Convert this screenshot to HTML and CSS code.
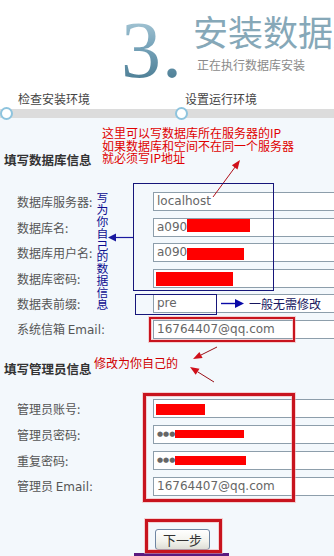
FILE: index.html
```html
<!DOCTYPE html>
<html lang="zh-CN">
<head>
<meta charset="utf-8">
<title>安装数据库</title>
<link rel="stylesheet" href="styles.css">
</head>
<body>
<div class="page">
  <header class="header">
    <div class="num">3.</div>
    <div class="titles">
      <div class="title">安装数据库</div>
      <div class="subtitle">正在执行数据库安装</div>
    </div>
  </header>

  <div class="steps">
    <div class="step-labels">
      <span class="step-label">检查安装环境</span>
      <span class="step-label">设置运行环境</span>
    </div>
    <div class="bar">
      <span class="dot dot-first"></span>
      <span class="dot dot-second"></span>
    </div>
  </div>

  <main class="main">
    <h2 class="sec-title sec-db">填写数据库信息</h2>
    <div class="grid grid-db">
      <label class="lbl">数据库服务器:</label><div class="field">localhost</div>
      <label class="lbl">数据库名:</label><div class="field">a090<span class="red r-dbname"></span></div>
      <label class="lbl">数据库用户名:</label><div class="field">a090<span class="red r-dbuser"></span></div>
      <label class="lbl">数据库密码:</label><div class="field"><span class="red r-dbpass"></span></div>
      <label class="lbl">数据表前缀:</label><div class="field">pre</div>
      <label class="lbl">系统信箱 <span class="lat">Email:</span></label><div class="field">16764407@qq.com</div>
    </div>

    <h2 class="sec-title sec-admin">填写管理员信息</h2>
    <div class="grid grid-admin">
      <label class="lbl">管理员账号:</label><div class="field"><span class="red r-acct"></span></div>
      <label class="lbl">管理员密码:</label><div class="field"><span class="dots">●●●</span><span class="red r-pass"></span></div>
      <label class="lbl">重复密码:</label><div class="field"><span class="dots">●●●</span><span class="red r-pass2"></span></div>
      <label class="lbl">管理员 <span class="lat">Email:</span></label><div class="field">16764407@qq.com</div>
    </div>

    <div class="actions">
      <button class="btn" type="button">下一步</button>
    </div>
  </main>

  <div class="note note-ip">这里可以写数据库所在服务器的IP<br>如果数据库和空间不在同一个服务器<br>就必须写IP地址</div>
  <div class="note note-vert">写为你自己的数据信息</div>
  <div class="note note-pre">一般无需修改</div>
  <div class="note note-admin">修改为你自己的</div>

  <svg class="overlay" width="334" height="556" viewBox="0 0 334 556" aria-hidden="true">
    <line x1="213" y1="197" x2="235.5" y2="166.5" stroke="#b0101a" stroke-width="1"/>
    <polygon points="240,160 237.5,169.4 231.9,165.2" fill="#d0101a"/>
    <rect x="133.5" y="183.5" width="140" height="107" fill="none" stroke="#16167a" stroke-width="1"/>
    <line x1="133" y1="237.5" x2="114" y2="237.5" stroke="#1a1aa0" stroke-width="1.2"/>
    <polygon points="108,237.5 116,233.5 116,241.5" fill="#1a1aa0"/>
    <rect x="135.5" y="294.5" width="81" height="20" fill="none" stroke="#16167a" stroke-width="1"/>
    <line x1="221" y1="303.5" x2="237" y2="303.5" stroke="#0a0aa8" stroke-width="1.4"/>
    <polygon points="244,303.5 235,299 235,308" fill="#0a0aa8"/>
    <rect x="150" y="318" width="144" height="23" fill="none" stroke="#f3a8a8" stroke-width="4" opacity="0.5"/>
    <rect x="150" y="318" width="144" height="23" fill="none" stroke="#c8141e" stroke-width="2"/>
    <line x1="217" y1="347" x2="201" y2="355" stroke="#9a1018" stroke-width="1"/>
    <polygon points="193,359 202.6,358.1 199.4,351.9" fill="#d0101a"/>
    <line x1="214" y1="382" x2="197.6" y2="371.8" stroke="#9a1018" stroke-width="1"/>
    <polygon points="190,367 199.5,368.8 195.7,374.8" fill="#d0101a"/>
    <rect x="144.5" y="394.5" width="149" height="106" fill="none" stroke="#f3a8a8" stroke-width="5" opacity="0.5"/>
    <rect x="144.5" y="394.5" width="149" height="106" fill="none" stroke="#c8141e" stroke-width="3"/>
    <rect x="134" y="553" width="95" height="3" fill="#5a1a80"/>
    <rect x="146.5" y="520.5" width="74" height="31" fill="none" stroke="#f3a8a8" stroke-width="5" opacity="0.5"/>
    <rect x="146.5" y="520.5" width="74" height="31" fill="none" stroke="#c8141e" stroke-width="3"/>
  </svg>
</div>
</body>
</html>
```
FILE: styles.css
```css
html, body {
  margin: 0;
  padding: 0;
}
body {
  width: 334px;
  height: 556px;
  overflow: hidden;
  background: #f3f8fc;
  font-family: "Noto Sans CJK SC", "DejaVu Sans", sans-serif;
  font-size: 12px;
  color: #555;
}
.page {
  position: relative;
  width: 334px;
  height: 556px;
  overflow: hidden;
}

/* header */
.header {
  height: 86px;
  background: #ffffff;
  display: flex;
  padding-left: 121px;
  box-sizing: border-box;
  white-space: nowrap;
  overflow: hidden;
}
.num {
  font-family: "Liberation Serif", serif;
  font-size: 80px;
  line-height: 80px;
  margin-top: 10px;
  background: linear-gradient(180deg, #b6d2de 0%, #7aa6bc 45%, #46788f 100%);
  -webkit-background-clip: text;
  background-clip: text;
  color: transparent;
  letter-spacing: 1px;
}
.titles {
  margin-left: 10px;
  display: flex;
  flex-direction: column;
}
.title {
  font-size: 35px;
  line-height: 36px;
  margin-top: 13px;
  color: #86a8b8;
}
.subtitle {
  font-size: 12px;
  line-height: 16px;
  margin-top: 8px;
  margin-left: 4px;
  color: #8a8a8a;
}

/* steps */
.steps {
  background: #ffffff;
  padding-top: 5px;
}
.step-labels {
  display: flex;
  height: 16px;
  line-height: 16px;
}
.step-label {
  width: 175px;
  padding-left: 18px;
  box-sizing: border-box;
  color: #444;
  font-size: 12px;
}
.bar {
  margin-top: 2px;
  height: 9px;
  background: #dcdcdc;
  display: flex;
  align-items: center;
}
.dot {
  flex: none;
  width: 9px;
  height: 9px;
  border: 2px solid #8ec4de;
  border-radius: 50%;
  background: #ffffff;
}
.dot-first { margin-left: 0px; }
.dot-second { margin-left: 162px; }

/* main */
.main {
  padding-top: 34px;
}
.sec-title {
  margin: 0;
  padding-left: 4px;
  font-size: 12.5px;
  line-height: 16px;
  font-weight: bold;
  color: #333;
}
.sec-db { margin-bottom: 24px; }
.sec-admin { margin-top: 22px; margin-bottom: 22px; }

.grid {
  display: grid;
  grid-template-columns: 136px 220px;
  grid-auto-rows: 19px;
  padding-left: 17px;
  align-items: center;
}
.grid-db { row-gap: 6.6px; }
.grid-admin { row-gap: 7px; }

.lbl {
  font-size: 12px;
  color: #555;
  line-height: 19px;
  white-space: nowrap;
}
.lat {
  font-family: "DejaVu Sans", sans-serif;
}
.field {
  height: 19px;
  box-sizing: border-box;
  border: 1px solid #8d9eab;
  background: #ffffff;
  font-family: "DejaVu Sans", sans-serif;
  font-size: 12px;
  line-height: 17px;
  color: #666;
  padding-left: 3px;
  display: flex;
  align-items: center;
  white-space: nowrap;
}
.dots {
  font-size: 7px;
  color: #666;
}
.red {
  display: inline-block;
  background: #ff0000;
}
.r-dbname { width: 63px; height: 13px; align-self: flex-start; }
.r-dbuser { width: 57px; height: 12px; align-self: flex-end; margin-bottom: 1px; }
.r-dbpass { width: 77px; height: 14px; margin-left: -1px; margin-top: 2px; }
.r-acct { width: 49px; height: 11px; margin-left: -1px; margin-top: 2px; }
.r-pass { width: 69px; height: 8px; }
.r-pass2 { width: 71px; height: 9px; }

.actions {
  padding-left: 155px;
  margin-top: 33px;
}
.btn {
  width: 55px;
  height: 21px;
  padding: 0;
  border: 1px solid #6f86a3;
  border-radius: 3px;
  background: linear-gradient(180deg, #ffffff 0%, #f2f2ec 60%, #deded6 100%);
  font-family: "Noto Sans CJK SC", sans-serif;
  font-size: 13px;
  line-height: 19px;
  color: #333;
}

/* annotations */
.note {
  position: absolute;
  font-family: "Noto Sans CJK SC", sans-serif;
  font-size: 12px;
  white-space: nowrap;
}
.note-ip {
  left: 102px;
  top: 127px;
  line-height: 12.5px;
  color: #e00000;
}
.note-vert {
  left: 96px;
  top: 192px;
  writing-mode: vertical-rl;
  line-height: 12px;
  font-size: 11.8px;
  color: #0c0c90;
}
.note-pre {
  left: 249px;
  top: 296px;
  line-height: 16px;
  color: #161660;
}
.note-admin {
  left: 94px;
  top: 355px;
  line-height: 16px;
  color: #d00000;
}
.overlay {
  position: absolute;
  left: 0;
  top: 0;
  pointer-events: none;
}
```
